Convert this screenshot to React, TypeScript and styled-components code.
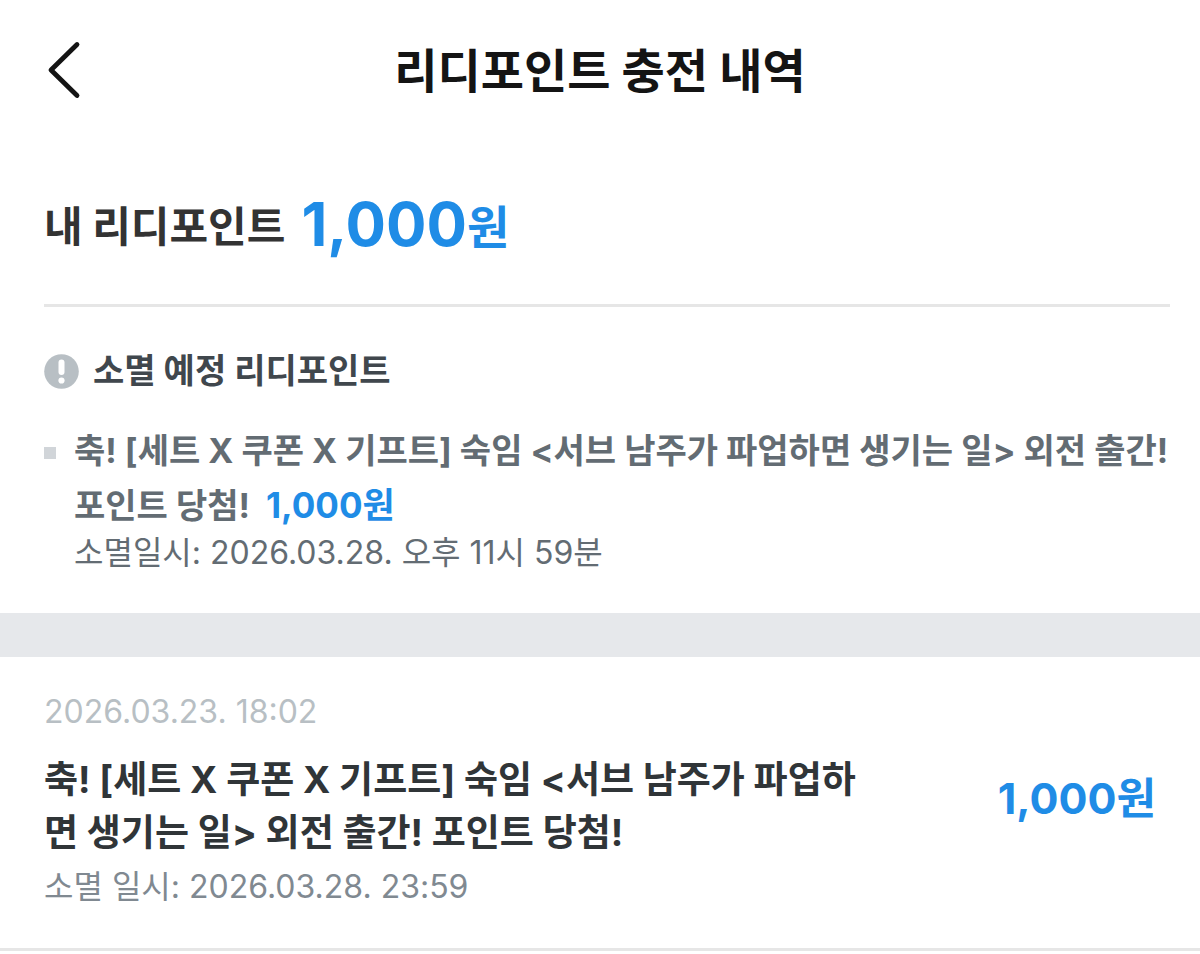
import React from 'react';
import styled, { createGlobalStyle } from 'styled-components';

const GlobalStyle = createGlobalStyle`
  * { box-sizing: border-box; }
  body {
    margin: 0;
    background: #fff;
    color: #303538;
    font-family: Inter, "Noto Sans CJK KR", sans-serif;
    word-break: break-all;
  }
  h1, h2, p, ul { margin: 0; padding: 0; }
  ul { list-style: none; }
`;

const Header = styled.header`
  display: grid;
  grid-template-columns: 80px 1fr 80px;
  align-items: center;
  height: 140px;
  padding: 0 24px;
`;

const BackButton = styled.button`
  display: flex;
  align-items: center;
  justify-content: center;
  height: 80px;
  padding: 0;
  border: 0;
  background: none;
  color: #141414;
  cursor: pointer;
`;

const Title = styled.h1`
  padding-top: 2px;
  color: #141414;
  font-size: 47px;
  font-weight: 700;
  line-height: 64px;
  text-align: center;
`;

const Summary = styled.section`
  padding: 44px 30px 40px 44px;
`;

const Balance = styled.div`
  display: flex;
  align-items: center;
  gap: 16px;
  padding-bottom: 40px;
  border-bottom: 3px solid #e6e6e6;
  line-height: 80px;
`;

const BalanceLabel = styled.p`
  color: #333;
  font-family: "Noto Sans CJK KR", sans-serif;
  font-size: 42px;
  font-weight: 700;
`;

const Amount = styled.strong<{ $size: number }>`
  color: #1f8ce6;
  font-size: ${(p) => p.$size}px;
  font-weight: 700;
  white-space: nowrap;
`;

const TotalAmount = styled(Amount)`
  display: flex;
  align-items: center;
`;

const Unit = styled.span`
  font-family: "Noto Sans CJK KR", sans-serif;
  font-size: 46px;
`;

const NoticeTitle = styled.h2`
  display: flex;
  align-items: center;
  gap: 14px;
  margin-top: 40px;
  color: #40474d;
  font-size: 34px;
  font-weight: 700;
  line-height: 48px;
`;

const ExpiringList = styled.ul`
  margin-top: 29px;
`;

const ExpiringItem = styled.li`
  display: grid;
  grid-template-columns: 12px 1fr;
  column-gap: 18px;

  &::before {
    content: "";
    height: 12px;
    margin-top: 23px;
    background: #d1d5d9;
  }
`;

const ExpiringName = styled.p`
  color: #636c73;
  font-size: 34px;
  font-weight: 700;
  line-height: 54px;

  ${Amount} { margin-left: 8px; }
`;

const ExpiringDate = styled.p`
  color: #636c73;
  font-size: 32px;
  line-height: 40px;
`;

const Divider = styled.hr`
  height: 44px;
  margin: 0;
  border: 0;
  background: #e6e8eb;
`;

const HistoryItem = styled.li`
  display: flex;
  align-items: center;
  justify-content: space-between;
  padding: 0 44px;
  border-bottom: 3px solid #e6e6e6;
`;

const HistoryBody = styled.div`
  width: 74%;
  padding: 30px 0 34px;
`;

const HistoryAmount = styled.p`
  line-height: 56px;
`;

const HistoryDate = styled.p`
  color: #b8bfc4;
  font-size: 32px;
  line-height: 50px;
`;

const HistoryName = styled.p`
  margin-top: 16px;
  color: #303538;
  font-size: 37px;
  font-weight: 700;
  line-height: 53px;
`;

const HistoryExpiry = styled.p`
  color: #808991;
  font-size: 32px;
  line-height: 55px;
`;

const BackIcon = () => (
  <svg width="34" height="58" viewBox="0 0 34 58" fill="none" aria-hidden="true">
    <path d="M30 3.500 4 29 30 54.500" stroke="currentColor" strokeWidth="4.800" strokeLinecap="round" strokeLinejoin="round" />
  </svg>
);

const NoticeIcon = () => (
  <svg width="35" height="35" viewBox="0 0 35 35" aria-hidden="true">
    <circle cx="17.500" cy="17.500" r="17.300" fill="#b8bfc4" />
    <rect x="14.500" y="5.500" width="6" height="15.500" rx="3" fill="#fff" />
    <circle cx="17.500" cy="26.500" r="3.100" fill="#fff" />
  </svg>
);

export default function App() {
  return (
    <>
      <GlobalStyle />
      <Header>
        <BackButton type="button" aria-label="뒤로"><BackIcon /></BackButton>
        <Title>리디포인트 충전 내역</Title>
      </Header>
      <main>
        <Summary>
          <Balance>
            <BalanceLabel>내 리디포인트</BalanceLabel>
            <TotalAmount $size={60}>1,000<Unit>원</Unit></TotalAmount>
          </Balance>
          <NoticeTitle><NoticeIcon />소멸 예정 리디포인트</NoticeTitle>
          <ExpiringList>
            <ExpiringItem>
              <div>
                <ExpiringName>
                  <span>축! [세트 X 쿠폰 X 기프트] 숙임 &lt;서브 남주가 파업하면 생기는 일&gt; 외전 출간! 포인트 당첨!</span>{' '}
                  <Amount $size={35}>1,000원</Amount>
                </ExpiringName>
                <ExpiringDate>소멸일시: 2026.03.28. 오후 11시 59분</ExpiringDate>
              </div>
            </ExpiringItem>
          </ExpiringList>
        </Summary>
        <Divider />
        <ul>
          <HistoryItem>
            <HistoryBody>
              <HistoryDate>2026.03.23. 18:02</HistoryDate>
              <HistoryName>축! [세트 X 쿠폰 X 기프트] 숙임 &lt;서브 남주가 파업하면 생기는 일&gt; 외전 출간! 포인트 당첨!</HistoryName>
              <HistoryExpiry>소멸 일시: 2026.03.28. 23:59</HistoryExpiry>
            </HistoryBody>
            <HistoryAmount><Amount $size={43}>1,000원</Amount></HistoryAmount>
          </HistoryItem>
        </ul>
      </main>
    </>
  );
}
